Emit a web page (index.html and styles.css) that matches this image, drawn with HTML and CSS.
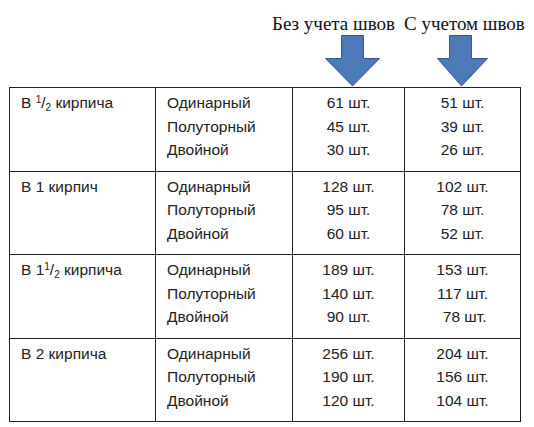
FILE: index.html
```html
<!DOCTYPE html>
<html>
<head>
<meta charset="utf-8">
<link rel="stylesheet" href="styles.css">
</head>
<body>
<div class="head">
  <span class="label l1">Без учета швов</span>
  <span class="label l2">С учетом швов</span>
</div>
<div class="arrows">
  <svg class="arrow a1" width="56" height="52" viewBox="0 0 56 52"><path d="M16.5 0.5 H38.5 V23.5 H54.5 L27.5 51 L0.5 23.5 H16.5 Z" fill="#4c7ab9" stroke="#35598e" stroke-width="1"/></svg>
  <svg class="arrow a2" width="52" height="52" viewBox="0 0 52 52"><path d="M12.5 0.5 H34.5 V23.5 H50.5 L24.5 51 L0.5 23.5 H12.5 Z" fill="#4c7ab9" stroke="#35598e" stroke-width="1"/></svg>
</div>
<table class="grid">
  <colgroup><col class="c1"><col class="c2"><col class="c3"><col class="c4"></colgroup>
  <tr>
    <td class="name">В <sup>1</sup>/<sub>2</sub> кирпича</td>
    <td class="kind">Одинарный<br>Полуторный<br>Двойной</td>
    <td class="num">61 шт.<br>45 шт.<br>30 шт.</td>
    <td class="num">51 шт.<br>39 шт.<br>26 шт.</td>
  </tr>
  <tr>
    <td class="name">В 1 кирпич</td>
    <td class="kind">Одинарный<br>Полуторный<br>Двойной</td>
    <td class="num">128 шт.<br>95 шт.<br>60 шт.</td>
    <td class="num">102 шт.<br>78 шт.<br>52 шт.</td>
  </tr>
  <tr>
    <td class="name">В 1<sup>1</sup>/<sub>2</sub> кирпича</td>
    <td class="kind">Одинарный<br>Полуторный<br>Двойной</td>
    <td class="num">189 шт.<br>140 шт.<br>90 шт.</td>
    <td class="num">153 шт.<br>117 шт.<br>&nbsp;78 шт.</td>
  </tr>
  <tr>
    <td class="name">В 2 кирпича</td>
    <td class="kind">Одинарный<br>Полуторный<br>Двойной</td>
    <td class="num">256 шт.<br>190 шт.<br>120 шт.</td>
    <td class="num">204 шт.<br>156 шт.<br>104 шт.</td>
  </tr>
</table>
</body>
</html>
```
FILE: styles.css
```css
html, body {
  margin: 0;
  padding: 0;
  background: #ffffff;
}
body {
  width: 534px;
  height: 427px;
  overflow: hidden;
}
.head {
  display: flex;
  padding-left: 272px;
  padding-top: 12px;
  height: 23px;
  font-family: "Liberation Serif", serif;
  font-size: 19px;
  line-height: 23px;
  color: #111;
  white-space: nowrap;
}
.label.l2 {
  margin-left: 9px;
}
.arrows {
  display: flex;
  padding-left: 325px;
  height: 52px;
}
.arrow {
  display: block;
}
.arrow.a2 {
  margin-left: 56px;
}
.grid {
  margin-left: 9px;
  border-collapse: collapse;
  table-layout: fixed;
  width: 511px;
  font-family: "Liberation Sans", Arial, sans-serif;
  font-size: 15.5px;
  line-height: 23.5px;
  color: #222;
}
.c1 { width: 146px; }
.c2 { width: 137px; }
.c3 { width: 112px; }
.c4 { width: 116px; }
.grid td {
  border: 1.5px solid #1e1e1e;
  height: 83.5px;
  padding: 3px 0 0 0;
  vertical-align: top;
  box-sizing: border-box;
}
.grid td.name,
.grid td.kind {
  padding-left: 11px;
}
.grid td.num {
  text-align: center;
}
.grid sup,
.grid sub {
  font-size: 10px;
  line-height: 0;
}
.grid sup {
  vertical-align: 5px;
}
.grid sub {
  vertical-align: -3px;
}
```
